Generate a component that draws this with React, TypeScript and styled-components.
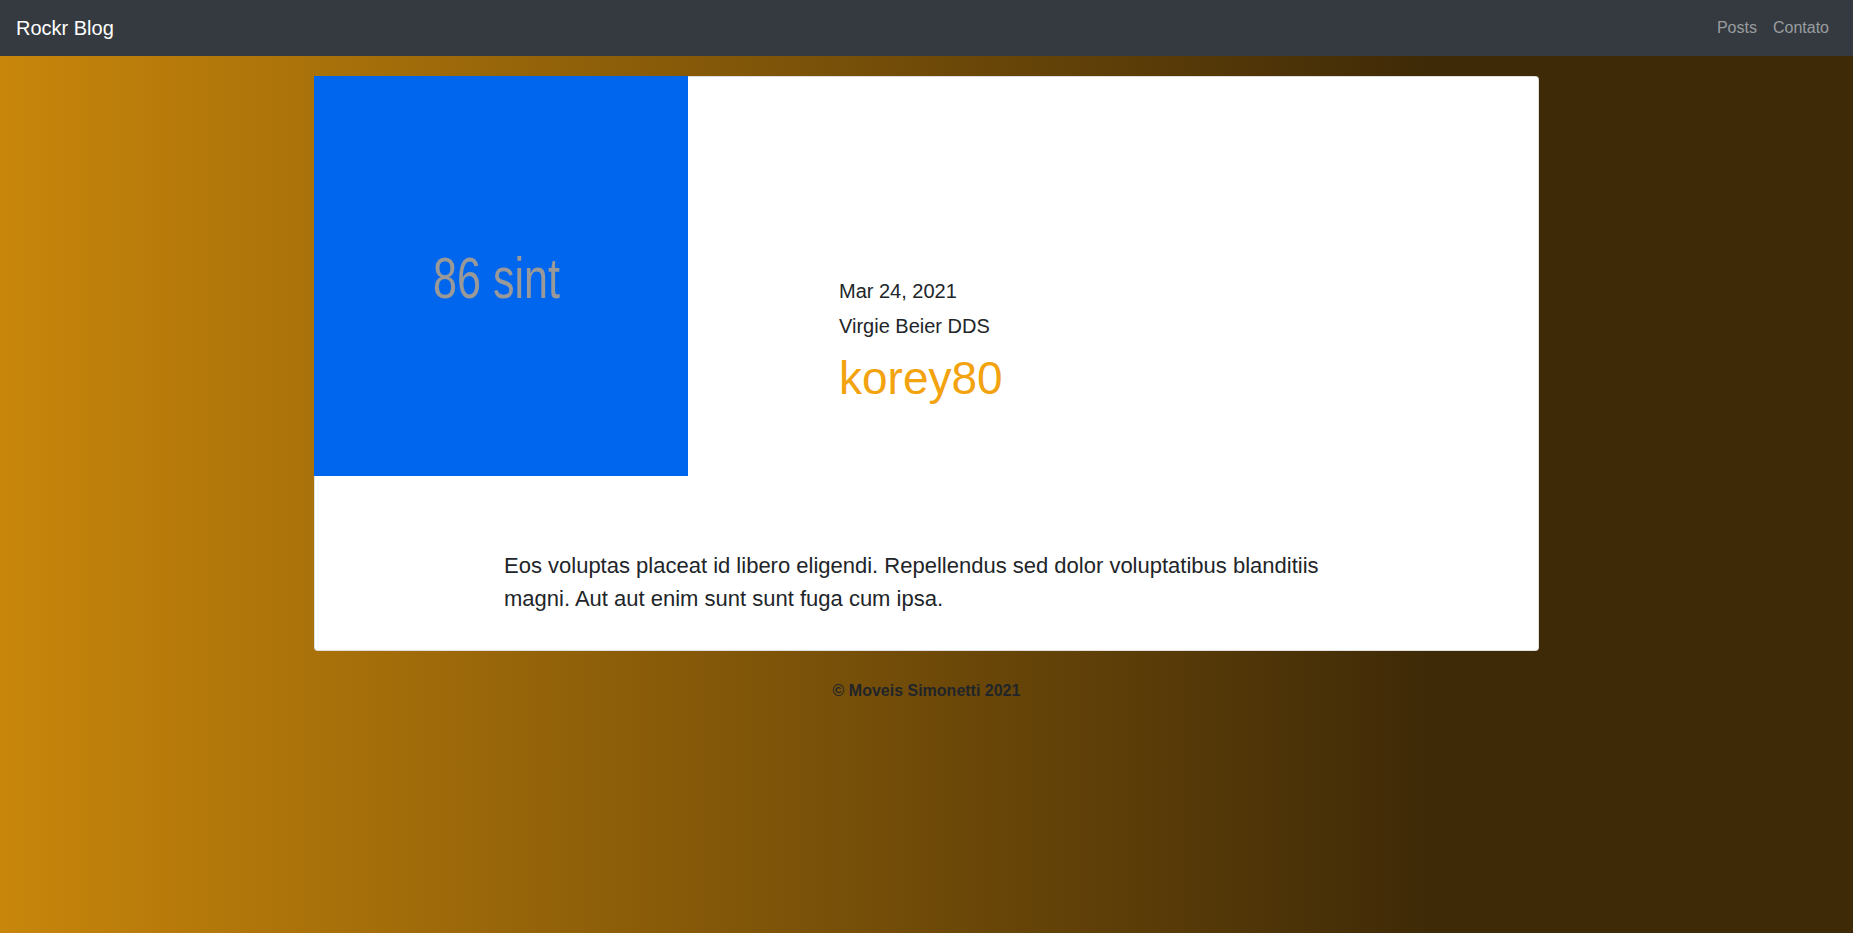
import React from "react";
import styled, { createGlobalStyle } from "styled-components";

const GlobalStyle = createGlobalStyle`
  html, body {
    margin: 0;
    padding: 0;
    background: #ffffff;
  }
  body {
    font-family: "Liberation Sans", Arial, sans-serif;
    color: #212529;
  }
  * { box-sizing: border-box; }
`;

const Navbar = styled.nav`
  height: 56px;
  background: #343a40;
  display: flex;
  align-items: center;
  justify-content: space-between;
  padding: 8px 16px;
`;

const Brand = styled.a`
  font-size: 20px;
  line-height: 30px;
  padding: 5px 0;
  color: #ffffff;
  text-decoration: none;
`;

const NavList = styled.div`
  display: flex;
`;

const NavLink = styled.a`
  font-size: 16px;
  line-height: 24px;
  padding: 8px;
  color: rgba(255, 255, 255, 0.5);
  text-decoration: none;
`;

const Main = styled.main`
  min-height: calc(100vh - 68px);
  padding-top: 20px;
  background: linear-gradient(to right, #c8860b 0%, #3f2a07 77%, #3f2a07 100%);
`;

const Card = styled.article`
  width: 1225px;
  margin: 0 auto;
  background: #ffffff;
  border: 1px solid rgba(0, 0, 0, 0.125);
  border-radius: 4px;
`;

const Top = styled.div`
  display: flex;
`;

const Thumb = styled.svg`
  display: block;
  flex: none;
  width: 374px;
  height: 400px;
  margin: -1px 0 0 -1px;
`;

const Info = styled.div`
  padding: 197px 0 0 151px;
`;

const Meta = styled.div`
  font-size: 20px;
  line-height: 35px;
  color: #212529;
`;

const Title = styled.h1`
  margin: 7px 0 0;
  font-size: 46px;
  line-height: 54px;
  font-weight: 400;
  color: #f2a30f;
`;

const Body = styled.div`
  padding: 73px 189px 35px 189px;
`;

const Text = styled.p`
  margin: 0;
  font-size: 22px;
  line-height: 33px;
  color: #212529;
`;

const Footer = styled.footer`
  padding-top: 28px;
  text-align: center;
  font-size: 16px;
  line-height: 24px;
  font-weight: 700;
  color: #212529;
`;

const post = {
  image: "86 sint",
  date: "Mar 24, 2021",
  author: "Virgie Beier DDS",
  title: "korey80",
  body: "Eos voluptas placeat id libero eligendi. Repellendus sed dolor voluptatibus blanditiis magni. Aut aut enim sunt sunt fuga cum ipsa.",
};

export default function App() {
  return (
    <>
      <GlobalStyle />
      <Navbar>
        <Brand href="#">Rockr Blog</Brand>
        <NavList>
          <NavLink href="#">Posts</NavLink>
          <NavLink href="#">Contato</NavLink>
        </NavList>
      </Navbar>
      <Main>
        <Card>
          <Top>
            <Thumb viewBox="0 0 374 400">
              <rect x="0" y="0" width="374" height="400" fill="#0066ee" />
              <text
                x="119"
                y="222"
                fontFamily="Liberation Sans, Arial, sans-serif"
                fontSize="58"
                fill="#999999"
                textLength="127"
                lengthAdjust="spacingAndGlyphs"
              >
                {post.image}
              </text>
            </Thumb>
            <Info>
              <Meta>{post.date}</Meta>
              <Meta>{post.author}</Meta>
              <Title>{post.title}</Title>
            </Info>
          </Top>
          <Body>
            <Text>{post.body}</Text>
          </Body>
        </Card>
        <Footer>© Moveis Simonetti 2021</Footer>
      </Main>
    </>
  );
}
